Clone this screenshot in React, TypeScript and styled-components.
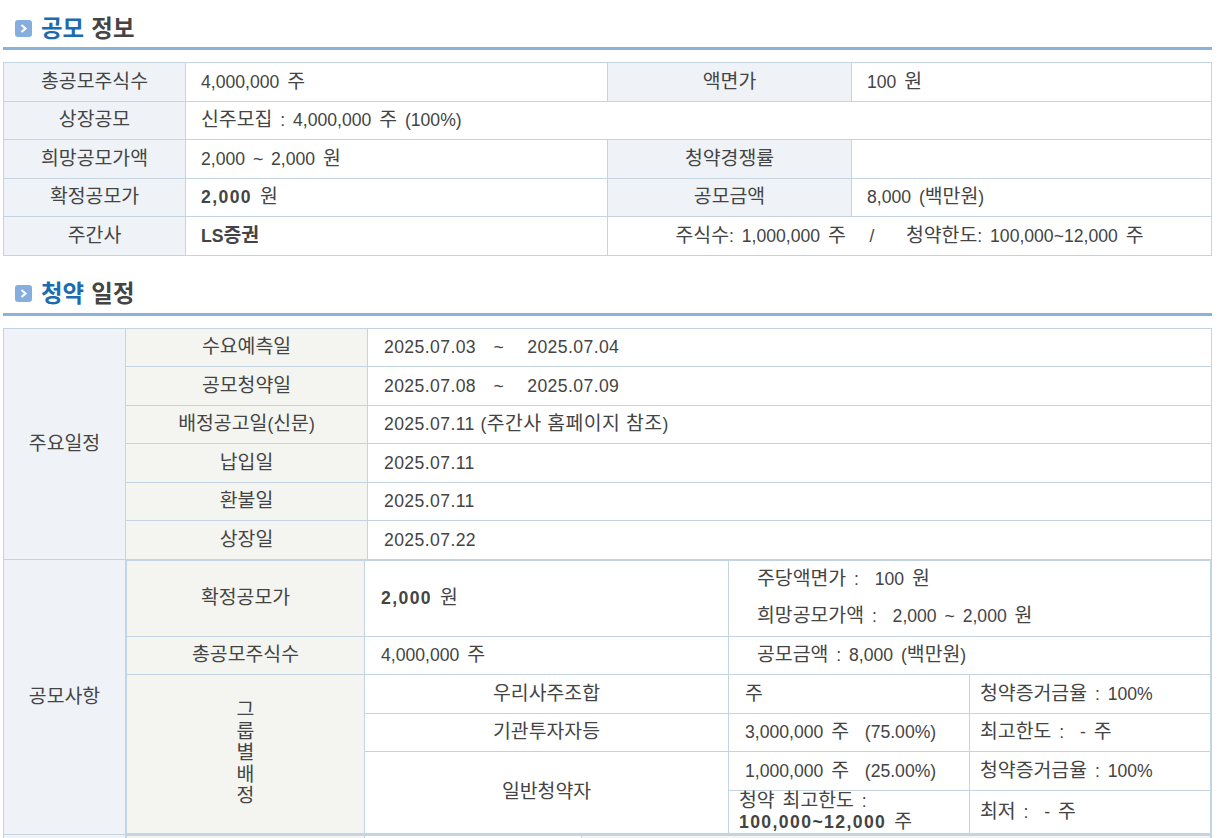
import { Fragment } from "react";
import styled, { createGlobalStyle } from "styled-components";

const GlobalStyle = createGlobalStyle`
  html, body {
    margin: 0;
    padding: 0;
    height: 100%;
    overflow: hidden;
    background: #fff;
  }
`;

const T = ({ children }: { children: string }) => (
  <>
    {children.split(/([가-힣]+)/).map((part, i) =>
      i % 2 ? <Ko key={i}>{part}</Ko> : <Fragment key={i}>{part}</Fragment>
    )}
  </>
);

const Heading = ({ accent, rest }: { accent: string; rest: string }) => (
  <HeadingBar>
    <svg width="17" height="17" viewBox="0 0 17 17">
      <rect width="17" height="17" rx="3" fill="#85aede" />
      <path d="M6.5 5 L10.5 8.5 L6.5 12" fill="none" stroke="#fff" strokeWidth="2.2" />
    </svg>
    <HeadingText>
      <Accent>{accent}</Accent> {rest}
    </HeadingText>
  </HeadingBar>
);

const Schedule = [
  ["수요예측일", "2025.07.03   ~    2025.07.04"],
  ["공모청약일", "2025.07.08   ~    2025.07.09"],
  ["배정공고일(신문)", "2025.07.11 (주간사 홈페이지 참조)"],
  ["납입일", "2025.07.11"],
  ["환불일", "2025.07.11"],
  ["상장일", "2025.07.22"],
];

export default function App() {
  return (
    <Page>
      <GlobalStyle />
      <Heading accent="공모" rest="정보" />
      <Table>
        <colgroup>
          <Col $w={182} />
          <Col $w={422} />
          <Col $w={244} />
          <Col $w={360} />
        </colgroup>
        <tbody>
          <Row>
            <Head><T>총공모주식수</T></Head>
            <Value><T>4,000,000 주</T></Value>
            <Head><T>액면가</T></Head>
            <Value><T>100 원</T></Value>
          </Row>
          <Row>
            <Head><T>상장공모</T></Head>
            <Value colSpan={3}><T>신주모집 : 4,000,000 주 (100%)</T></Value>
          </Row>
          <Row>
            <Head><T>희망공모가액</T></Head>
            <Value><T>2,000 ~ 2,000 원</T></Value>
            <Head><T>청약경쟁률</T></Head>
            <Value />
          </Row>
          <Row>
            <Head><T>확정공모가</T></Head>
            <Value><BoldNum>2,000</BoldNum> <T>원</T></Value>
            <Head><T>공모금액</T></Head>
            <Value><T>8,000 (백만원)</T></Value>
          </Row>
          <Row>
            <Head><T>주간사</T></Head>
            <Value><Strong><T>LS증권</T></Strong></Value>
            <Centered colSpan={2}>
              <T>주식수: 1,000,000 주   /    청약한도: 100,000~12,000 주</T>
            </Centered>
          </Row>
        </tbody>
      </Table>

      <SecondHeading>
        <Heading accent="청약" rest="일정" />
      </SecondHeading>
      <Table>
        <colgroup>
          <Col $w={122} />
          <Col $w={242} />
          <Col $w={844} />
        </colgroup>
        <tbody>
          {Schedule.map(([label, value], i) => (
            <Row key={label}>
              {i === 0 && <Head rowSpan={6}><T>주요일정</T></Head>}
              <Label><T>{label}</T></Label>
              <DateValue><T>{value}</T></DateValue>
            </Row>
          ))}
          <tr>
            <Head><T>공모사항</T></Head>
            <NestCell colSpan={2}>
              <Nested>
                <colgroup>
                  <Col $w={238} />
                  <Col $w={364} />
                  <Col $w={241} />
                  <Col $w={241} />
                </colgroup>
                <tbody>
                  <Row $h={76}>
                    <Label><T>확정공모가</T></Label>
                    <Value $pad={16}><BoldNum>2,000</BoldNum> <T>원</T></Value>
                    <Wide colSpan={2}>
                      <Stacked><T>주당액면가 :  100 원</T></Stacked>
                      <Stacked><T>희망공모가액 :  2,000 ~ 2,000 원</T></Stacked>
                    </Wide>
                  </Row>
                  <Row>
                    <Label><T>총공모주식수</T></Label>
                    <Value $pad={16}><T>4,000,000 주</T></Value>
                    <Wide colSpan={2}><T>공모금액 : 8,000 (백만원)</T></Wide>
                  </Row>
                  <Row>
                    <Label rowSpan={4}>
                      <VerticalText><T>그</T><br /><T>룹</T><br /><T>별</T><br /><T>배</T><br /><T>정</T></VerticalText>
                    </Label>
                    <Centered><T>우리사주조합</T></Centered>
                    <Value $pad={16}><T>주</T></Value>
                    <Tight><T>청약증거금율 : 100%</T></Tight>
                  </Row>
                  <Row>
                    <Centered><T>기관투자자등</T></Centered>
                    <Value $pad={16}><T>3,000,000 주  (75.00%)</T></Value>
                    <Tight><T>최고한도 :  - 주</T></Tight>
                  </Row>
                  <Row>
                    <Centered rowSpan={2}><T>일반청약자</T></Centered>
                    <Value $pad={16}><T>1,000,000 주  (25.00%)</T></Value>
                    <Tight><T>청약증거금율 : 100%</T></Tight>
                  </Row>
                  <Row $h={43}>
                    <LimitCell>
                      <T>청약 최고한도 :</T>
                      <br />
                      <BoldNum>100,000~12,000</BoldNum> <T>주</T>
                    </LimitCell>
                    <Tight><T>최저 :  - 주</T></Tight>
                  </Row>
                </tbody>
              </Nested>
            </NestCell>
          </tr>
          <tr>
            <Head />
            <NestCell colSpan={2}>
              <Nested>
                <colgroup>
                  <Col $w={238} />
                  <Col $w={217} />
                  <Col $w={629} />
                </colgroup>
                <tbody>
                  <Row>
                    <Label />
                    <Value />
                    <Label />
                  </Row>
                </tbody>
              </Nested>
            </NestCell>
          </tr>
        </tbody>
      </Table>
    </Page>
  );
}

const Page = styled.div`
  width: 1209px;
  padding-left: 3px;
  font-family: "Liberation Sans", "Noto Sans CJK KR", sans-serif;
  font-size: 17.6px;
  color: #444;
`;

const Ko = styled.span`
  font-size: 19.4px;
  line-height: 1;
`;

const HeadingBar = styled.div`
  height: 47px;
  padding-left: 12px;
  margin-bottom: 12px;
  display: flex;
  align-items: center;
  gap: 9px;
  border-bottom: 3px solid #8cb2dc;
  box-sizing: content-box;

  svg {
    margin-top: 9px;
  }
`;

const HeadingText = styled.h2`
  margin: 6px 0 0;
  font-family: "Noto Sans CJK KR", sans-serif;
  font-size: 23.4px;
  font-weight: 700;
  line-height: 30px;
  word-spacing: 2px;
  color: #444;
`;

const Accent = styled.span`
  color: #1a6cb0;
`;

const SecondHeading = styled.div`
  margin-top: 10px;
`;

const Table = styled.table`
  width: 1208px;
  table-layout: fixed;
  border-collapse: collapse;
`;

const Nested = styled.table`
  width: 100%;
  table-layout: fixed;
  border-collapse: collapse;
`;

const Col = styled.col<{ $w: number }>`
  width: ${(p) => p.$w}px;
`;

const Row = styled.tr<{ $h?: number }>`
  height: ${(p) => p.$h ?? 38.5}px;
`;

const Cell = styled.td`
  padding: 0;
  border: 1px solid #c4d4e3;
  white-space: pre-wrap;
  word-spacing: 3px;
  line-height: 22px;
`;

const Head = styled(Cell)`
  background: #eff3f7;
  text-align: center;
`;

const Label = styled(Cell)`
  background: #f4f5f0;
  text-align: center;
`;

const Value = styled(Cell)<{ $pad?: number }>`
  padding-left: ${(p) => p.$pad ?? 15}px;
`;

const DateValue = styled(Cell)`
  padding-left: 16px;
  letter-spacing: 0.4px;
  word-spacing: 0.5px;
`;

const Centered = styled(Cell)`
  text-align: center;
`;

const Wide = styled(Cell)`
  padding-left: 28px;
`;

const Tight = styled(Cell)`
  padding-left: 10px;
`;

const LimitCell = styled(Cell)`
  padding-left: 10px;
  line-height: 21px;
`;

const NestCell = styled(Cell)`
  vertical-align: top;
`;

const Strong = styled.strong`
  font-weight: 700;
`;

const BoldNum = styled(Strong)`
  letter-spacing: 1.4px;
`;

const Stacked = styled.div`
  line-height: 37px;
`;

const VerticalText = styled.div`
  line-height: 21.5px;
`;
